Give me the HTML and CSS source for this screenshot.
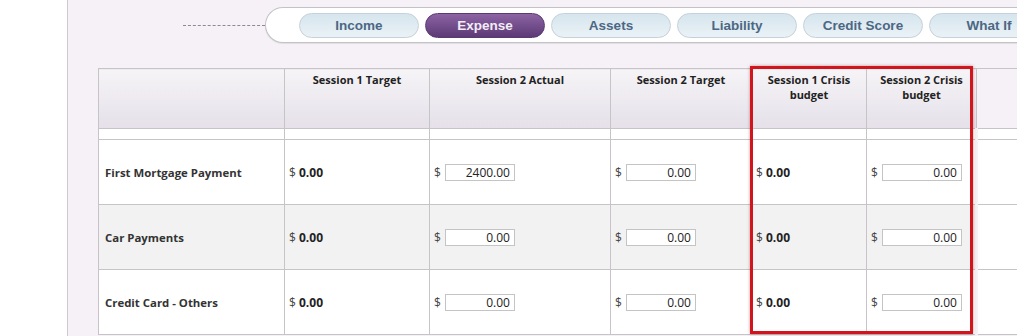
FILE: index.html
```html
<!DOCTYPE html>
<html lang="en">
<head>
    <meta charset="UTF-8">
    <title>Expense Budget</title>
    <link rel="stylesheet" href="styles.css">
</head>
<body>

<div class="panel">
    <div class="tabbar">
        <div class="dash"></div>
        <div class="tabs">
            <button class="tab">Income</button>
            <button class="tab active">Expense</button>
            <button class="tab">Assets</button>
            <button class="tab">Liability</button>
            <button class="tab">Credit Score</button>
            <button class="tab">What If</button>
        </div>
    </div>

    <div class="table-wrap">
        <table class="budget">
            <colgroup>
                <col style="width:186px">
                <col style="width:145px">
                <col style="width:181px">
                <col style="width:141px">
                <col style="width:115px">
                <col style="width:110px">
                <col style="width:60px">
            </colgroup>
            <tr class="head">
                <th></th>
                <th>Session 1 Target</th>
                <th>Session 2 Actual</th>
                <th>Session 2 Target</th>
                <th>Session 1 Crisis<br>budget</th>
                <th>Session 2 Crisis<br>budget</th>
                <th class="extra"></th>
            </tr>
            <tr class="spacer">
                <td></td><td></td><td></td><td></td><td></td><td></td><td class="extra"></td>
            </tr>
            <tr>
                <td class="label">First Mortgage Payment</td>
                <td>$ <b>0.00</b></td>
                <td>$ <input class="amt" value="2400.00"></td>
                <td>$ <input class="amt" value="0.00"></td>
                <td>$ <b>0.00</b></td>
                <td>$ <input class="amt wide" value="0.00"></td>
                <td class="extra"></td>
            </tr>
            <tr class="alt">
                <td class="label">Car Payments</td>
                <td>$ <b>0.00</b></td>
                <td>$ <input class="amt" value="0.00"></td>
                <td>$ <input class="amt" value="0.00"></td>
                <td>$ <b>0.00</b></td>
                <td>$ <input class="amt wide" value="0.00"></td>
                <td class="extra"></td>
            </tr>
            <tr>
                <td class="label">Credit Card - Others</td>
                <td>$ <b>0.00</b></td>
                <td>$ <input class="amt" value="0.00"></td>
                <td>$ <input class="amt" value="0.00"></td>
                <td>$ <b>0.00</b></td>
                <td>$ <input class="amt wide" value="0.00"></td>
                <td class="extra"></td>
            </tr>
        </table>
        <!-- highlight around the crisis columns -->
        <div class="crisis-box"></div>
    </div>
</div>

</body>
</html>
```

FILE: styles.css
```css
body {
    margin: 0;
    background: #fff;
    font-family: "Open Sans", Arial, sans-serif;
    overflow: hidden;
}
.panel {
    margin-left: 67px;
    border-left: 1px solid #cfc8cf;
    background: #f5f1f6;
    height: 336px;
    overflow: hidden;
}
.tabbar {
    display: flex;
    align-items: center;
    padding-top: 7px;
    height: 36px;
}
.dash {
    flex: none;
    margin-left: 115px;
    width: 82px;
    border-top: 1px dashed #8a8a96;
}
.tabs {
    flex: none;
    display: flex;
    gap: 6px;
    align-items: center;
    height: 34px;
    padding-left: 33px;
    padding-right: 40px;
    background: #fff;
    border: 1px solid #c4c2c6;
    border-right: none;
    border-radius: 18px 0 0 18px;
    box-shadow: 0 1px 1px rgba(0,0,0,0.08);
    white-space: nowrap;
}
.tab {
    flex: none;
    width: 120px;
    height: 25px;
    margin-top: 1px;
    border: 1px solid #c5d1d8;
    border-radius: 13px;
    background: linear-gradient(#d6e5ee, #eaf2f6);
    color: #4c6784;
    font-family: "Liberation Sans", Arial, sans-serif;
    font-weight: bold;
    font-size: 13.5px;
    padding: 0;
}
.tab.active {
    background: linear-gradient(#8c63a3, #5c3a76);
    border-color: #5b3a72;
    color: #f3ecf7;
}
.table-wrap {
    position: relative;
    margin-top: 25px;
    margin-left: 30px;
    width: 938px;
}
.budget {
    width: 938px;
    border-collapse: collapse;
    table-layout: fixed;
    font-size: 11px;
    color: #333;
}
.budget th, .budget td {
    border: 1px solid #c6c4c6;
}
.head th {
    height: 56px;
    vertical-align: top;
    padding: 3px 4px 0;
    font-weight: bold;
    color: #222;
    line-height: 15px;
    background: linear-gradient(#f6f4f7, #e5e0e9);
}
.head th.extra {
    background: transparent;
    border-right: none;
}
.budget tr td {
    height: 64px;
    padding: 0 0 0 4px;
    background: #fff;
    vertical-align: middle;
    white-space: nowrap;
    font-size: 12px;
    color: #444;
}
.budget tr.spacer td {
    height: 10px;
    padding: 0;
}
.budget tr.alt td {
    background: #f2f2f2;
}
.budget td.label {
    padding-left: 6px;
    font-size: 11.4px;
    font-weight: bold;
    color: #333;
}
.budget td b {
    color: #222;
}
.budget td.extra, .budget tr.alt td.extra {
    background: #fff;
    border-right: none;
    border-left: 3px solid #f5f1f6;
}
.amt {
    width: 70px;
    height: 17px;
    box-sizing: border-box;
    margin-left: 1px;
    border: 1px solid #c4c4c4;
    padding: 0 4px;
    text-align: right;
    font-family: "Open Sans", Arial, sans-serif;
    font-size: 12px;
    color: #222;
    background: #fff;
}
.amt.wide {
    width: 80px;
}
.crisis-box {
    position: absolute;
    left: 652px;
    top: -2px;
    width: 217px;
    height: 262px;
    border: 3px solid #d0161c;
    box-shadow: 0 0 3px rgba(120,0,0,0.4);
    pointer-events: none;
}
```
